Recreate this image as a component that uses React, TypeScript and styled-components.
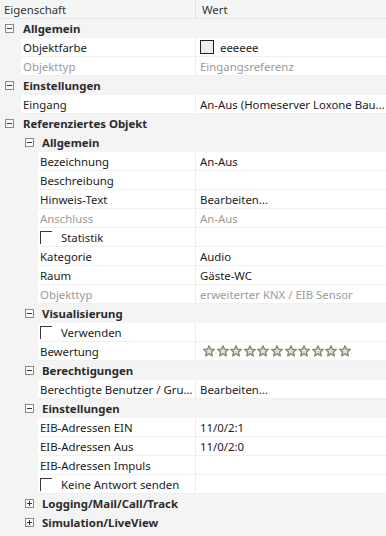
import React from 'react';
import styled, { createGlobalStyle } from 'styled-components';

const NAME_COL = 195;

type RowKind = 'group' | 'item' | 'check' | 'color' | 'stars';

interface PropRow {
  kind: RowKind;
  level: number;
  label: string;
  value?: string;
  disabled?: boolean;
  collapsed?: boolean;
}

const rows: PropRow[] = [
  { kind: 'group', level: 0, label: 'Allgemein' },
  { kind: 'color', level: 0, label: 'Objektfarbe', value: 'eeeeee' },
  { kind: 'item', level: 0, label: 'Objekttyp', value: 'Eingangsreferenz', disabled: true },
  { kind: 'group', level: 0, label: 'Einstellungen' },
  { kind: 'item', level: 0, label: 'Eingang', value: 'An-Aus (Homeserver Loxone Bau...' },
  { kind: 'group', level: 0, label: 'Referenziertes Objekt' },
  { kind: 'group', level: 1, label: 'Allgemein' },
  { kind: 'item', level: 1, label: 'Bezeichnung', value: 'An-Aus' },
  { kind: 'item', level: 1, label: 'Beschreibung', value: '' },
  { kind: 'item', level: 1, label: 'Hinweis-Text', value: 'Bearbeiten...' },
  { kind: 'item', level: 1, label: 'Anschluss', value: 'An-Aus', disabled: true },
  { kind: 'check', level: 1, label: 'Statistik' },
  { kind: 'item', level: 1, label: 'Kategorie', value: 'Audio' },
  { kind: 'item', level: 1, label: 'Raum', value: 'Gäste-WC' },
  { kind: 'item', level: 1, label: 'Objekttyp', value: 'erweiterter KNX / EIB Sensor', disabled: true },
  { kind: 'group', level: 1, label: 'Visualisierung' },
  { kind: 'check', level: 1, label: 'Verwenden' },
  { kind: 'stars', level: 1, label: 'Bewertung' },
  { kind: 'group', level: 1, label: 'Berechtigungen' },
  { kind: 'item', level: 1, label: 'Berechtigte Benutzer / Gru...', value: 'Bearbeiten...' },
  { kind: 'group', level: 1, label: 'Einstellungen' },
  { kind: 'item', level: 1, label: 'EIB-Adressen EIN', value: '11/0/2:1' },
  { kind: 'item', level: 1, label: 'EIB-Adressen Aus', value: '11/0/2:0' },
  { kind: 'item', level: 1, label: 'EIB-Adressen Impuls', value: '' },
  { kind: 'check', level: 1, label: 'Keine Antwort senden' },
  { kind: 'group', level: 1, label: 'Logging/Mail/Call/Track', collapsed: true },
  { kind: 'group', level: 1, label: 'Simulation/LiveView', collapsed: true },
];

const GlobalStyle = createGlobalStyle`
  html, body {
    margin: 0;
    padding: 0;
    background: #f4f4f4;
  }
  body {
    font-family: "Noto Sans", "Open Sans", sans-serif;
    font-size: 11.4px;
    color: #1b1b1b;
  }
`;

const Grid = styled.div`
  width: 386px;
  height: 536px;
  background: #f4f4f4;
  overflow: hidden;
`;

const Header = styled.div`
  display: grid;
  grid-template-columns: ${NAME_COL}px 1fr;
  height: 19px;
  background: #f5f5f5;
  border-bottom: 1px solid #e6e6e6;
  box-sizing: border-box;
  color: #333;
`;

const HeaderCell = styled.div<{ $divider?: boolean }>`
  display: flex;
  align-items: center;
  padding-left: ${({ $divider }) => ($divider ? '6px' : '4px')};
  border-left: ${({ $divider }) => ($divider ? '1px solid #e2e2e2' : 'none')};
`;

const Row = styled.div`
  display: flex;
  height: 19px;
  background: #f4f4f4;
`;

const GroupRow = styled(Row)<{ $level: number }>`
  align-items: center;
  padding-left: ${({ $level }) => ($level === 0 ? 5 : 25)}px;
  gap: ${({ $level }) => ($level === 0 ? 9 : 8)}px;
  font-weight: 700;
  color: #2b2b2b;
`;

const Expander = styled.span`
  position: relative;
  width: 9px;
  height: 9px;
  box-sizing: border-box;
  border: 1px solid #8a8a8a;
  background: #fdfdfd;
  flex-shrink: 0;
  &::before {
    content: '';
    position: absolute;
    left: 1px;
    right: 1px;
    top: 3px;
    height: 1px;
    background: #333;
  }
`;

const PlusExpander = styled(Expander)`
  &::after {
    content: '';
    position: absolute;
    top: 1px;
    bottom: 1px;
    left: 3px;
    width: 1px;
    background: #333;
  }
`;

const Gutter = styled.div<{ $level: number }>`
  width: ${({ $level }) => ($level === 0 ? 21 : 38)}px;
  flex-shrink: 0;
`;

const Body = styled.div<{ $level: number }>`
  flex: 1;
  display: grid;
  grid-template-columns: ${({ $level }) => NAME_COL - ($level === 0 ? 21 : 38)}px 1fr;
  background: #fff;
  border-bottom: 1px solid #f0f0f0;
  box-sizing: border-box;
`;

const NameCell = styled.div<{ $disabled?: boolean }>`
  display: flex;
  align-items: center;
  gap: 9px;
  padding-left: 2px;
  white-space: nowrap;
  overflow: hidden;
  color: ${({ $disabled }) => ($disabled ? '#9b9b9b' : '#1b1b1b')};
`;

const ValueCell = styled.div<{ $disabled?: boolean }>`
  display: flex;
  align-items: center;
  gap: 6px;
  padding-left: 4px;
  border-left: 1px solid #ececec;
  white-space: nowrap;
  overflow: hidden;
  color: ${({ $disabled }) => ($disabled ? '#9b9b9b' : '#1b1b1b')};
`;

const CheckMark = styled.span`
  width: 12px;
  height: 13px;
  box-sizing: border-box;
  border-top: 1px solid #3a3a3a;
  border-left: 1px solid #3a3a3a;
  flex-shrink: 0;
`;

const Swatch = styled.span`
  width: 14px;
  height: 14px;
  box-sizing: border-box;
  border: 1px solid #222;
  background: #eeeeee;
  flex-shrink: 0;
`;

const Stars = styled.div`
  display: flex;
  gap: 1.6px;
  padding-left: 3px;
`;

const Star = () => (
  <svg width="12" height="12" viewBox="0 0 12 12">
    <path
      d="M6 0.8 L7.5 4.3 L11.3 4.5 L8.4 7 L9.3 10.8 L6 8.8 L2.7 10.8 L3.6 7 L0.7 4.5 L4.5 4.3 Z"
      fill="#e2e0d2"
      stroke="#8a8878"
      strokeWidth="1.4"
      strokeLinejoin="round"
    />
  </svg>
);

const PropertyRow: React.FC<{ row: PropRow }> = ({ row }) => {
  if (row.kind === 'group') {
    return (
      <GroupRow $level={row.level}>
        {row.collapsed ? <PlusExpander /> : <Expander />}
        {row.label}
      </GroupRow>
    );
  }
  return (
    <Row>
      <Gutter $level={row.level} />
      <Body $level={row.level}>
        <NameCell $disabled={row.disabled}>
          {row.kind === 'check' && <CheckMark />}
          {row.label}
        </NameCell>
        <ValueCell $disabled={row.disabled}>
          {row.kind === 'color' && <Swatch />}
          {row.kind === 'stars' ? (
            <Stars>
              {Array.from({ length: 11 }).map((_, i) => (
                <Star key={i} />
              ))}
            </Stars>
          ) : (
            row.value
          )}
        </ValueCell>
      </Body>
    </Row>
  );
};

export default function App() {
  return (
    <>
      <GlobalStyle />
      <Grid>
        <Header>
          <HeaderCell>Eigenschaft</HeaderCell>
          <HeaderCell $divider>Wert</HeaderCell>
        </Header>
        {rows.map((row, i) => (
          <PropertyRow key={i} row={row} />
        ))}
      </Grid>
    </>
  );
}
